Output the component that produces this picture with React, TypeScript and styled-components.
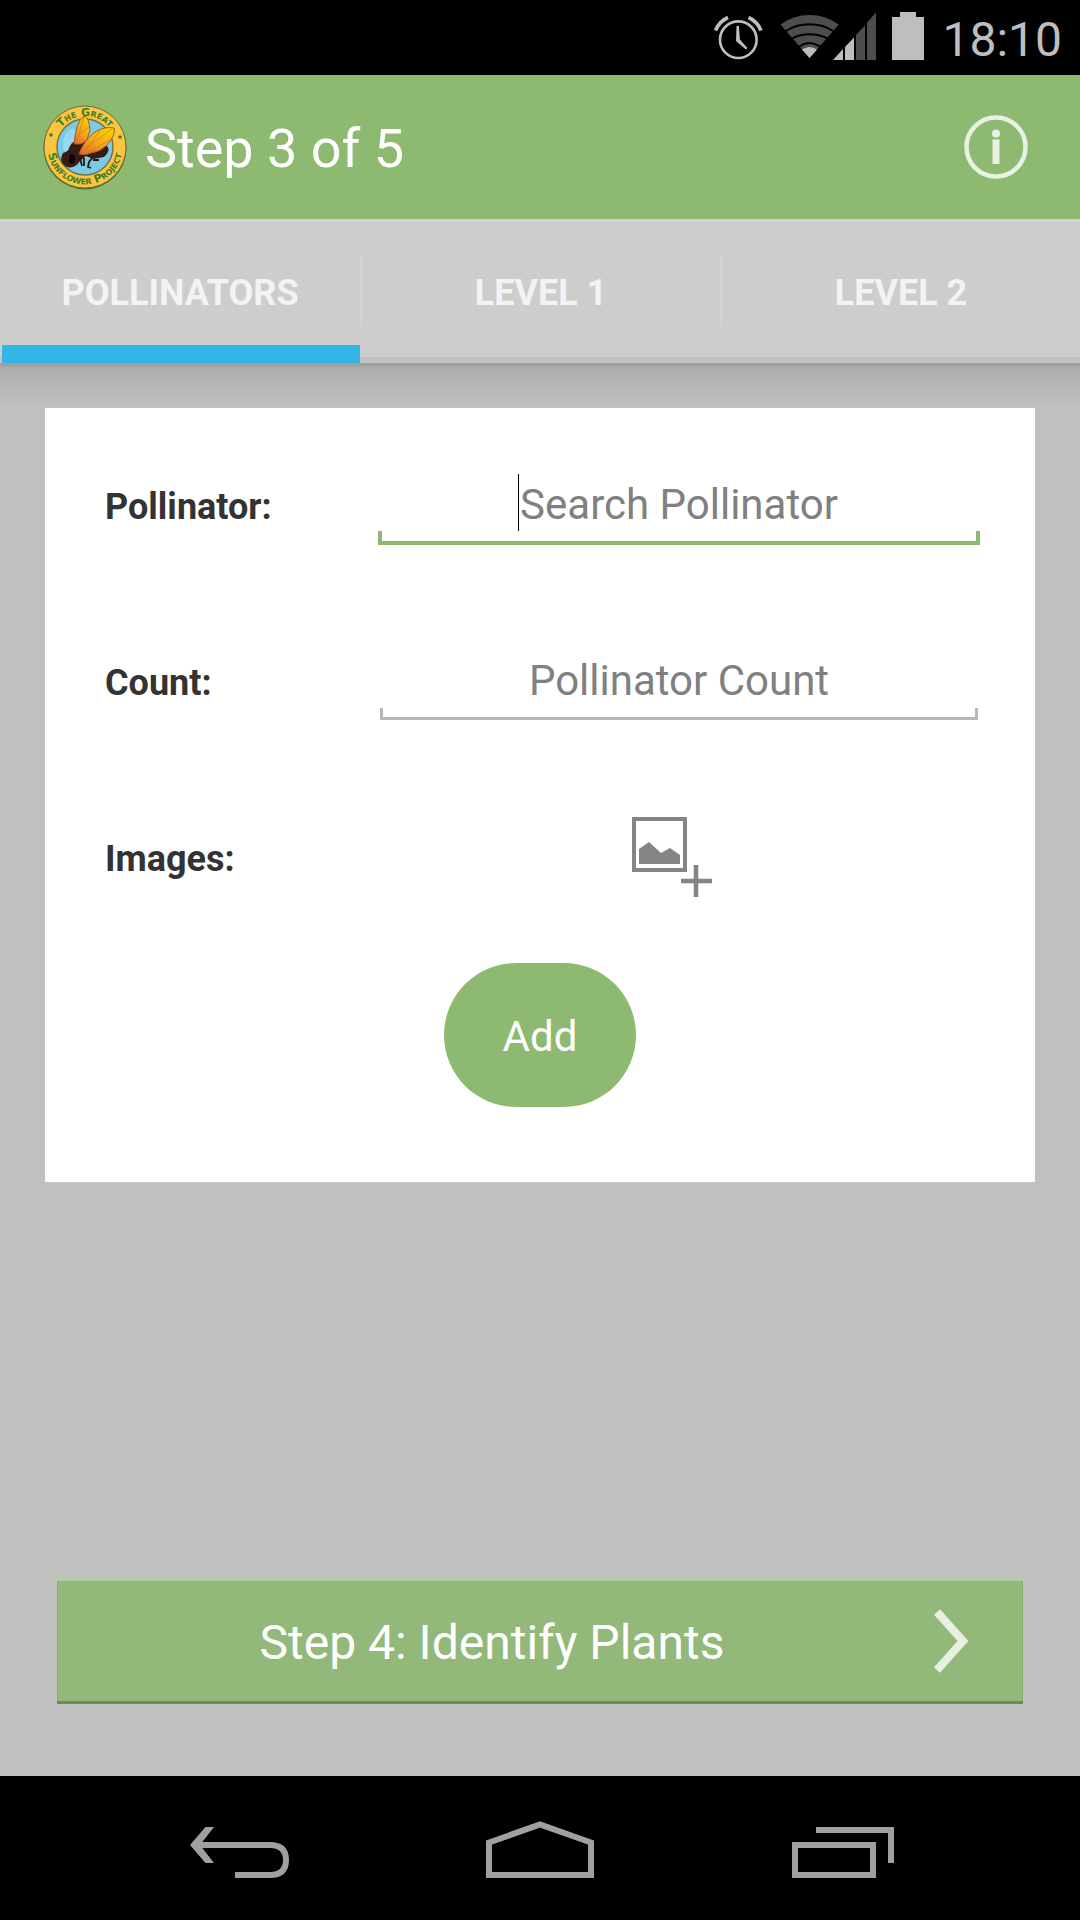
import React, { useState } from "react";
import styled, { createGlobalStyle } from "styled-components";

const green = "#8eb971";

const GlobalStyle = createGlobalStyle`
  *, *::before, *::after { box-sizing: border-box; }
  body {
    margin: 0;
    background: #bfc1be;
    font-family: Roboto, "Noto Sans", sans-serif;
  }
  button, input {
    font-family: inherit;
    margin: 0;
    border-radius: 0;
  }
`;

const Screen = styled.div`
  display: flex;
  flex-direction: column;
  min-height: 100vh;
`;

const StatusBar = styled.div`
  display: flex;
  align-items: center;
  justify-content: flex-end;
  gap: 18px;
  height: 75px;
  padding-right: 18px;
  background: #000;
  color: #bebebe;
`;

const Clock = styled.span`
  padding-top: 4px;
  font-size: 48px;
  line-height: 56px;
`;

const StatusIcons = styled.svg`
  display: block;
`;

const ActionBar = styled.header`
  display: flex;
  align-items: center;
  height: 144px;
  padding: 0 48px 0 42px;
  background: ${green};
`;

const Title = styled.h1`
  flex: 1;
  margin: 0 0 0 17px;
  padding-top: 4px;
  color: #fff;
  font-size: 54px;
  font-weight: 400;
  line-height: 64px;
`;

const LogoLettering = styled.g`
  fill: #3e7c27;
  font-family: "DejaVu Sans", sans-serif;
  font-size: 11px;
  font-weight: 700;
  font-variant: small-caps;
  text-anchor: middle;
`;

const IconButton = styled.button`
  display: flex;
  align-items: center;
  justify-content: center;
  padding: 0;
  border: 0;
  background: none;
  cursor: pointer;
`;

const TabBar = styled.nav`
  display: grid;
  grid-template-columns: repeat(3, 1fr);
  height: 144px;
  background: #cdcdcd;
  border-top: 3px solid #d3d3d3;
  box-shadow: inset 0 -6px #c1c1c1;
`;

const Tab = styled.button<{ $active: boolean }>`
  display: flex;
  padding: 33px 0 0;
  border: 0;
  border-left: 2px solid transparent;
  background: none;
  box-shadow: ${(p) => (p.$active ? "inset 0 -18px #33b5e5" : "none")};
  color: #f3f3f3;
  font-size: 36px;
  font-weight: 700;
  text-transform: uppercase;
  cursor: pointer;
`;

const TabLabel = styled.span`
  flex: 1;
  height: 72px;
  margin-left: -2px;
  line-height: 76px;
  text-align: center;

  ${Tab}:not(:first-child) & {
    border-left: 2px solid #d4d4d4;
  }
`;

const Main = styled.main`
  flex: 1;
  display: flex;
  flex-direction: column;
  padding: 45px 45px 72px;
  background:
    linear-gradient(#9f9f9f, #9f9f9f) 0 0 / 100% 3px no-repeat,
    linear-gradient(#a5a7a4, #b3b5b2 15px, #bfc1be) 0 0 / 100% 45px no-repeat,
    #bfc1be;
`;

const Card = styled.form`
  display: flex;
  flex-direction: column;
  padding: 57px 0 75px;
  background: #fff;
`;

const FieldRow = styled.div`
  display: grid;
  grid-template-columns: 273px 1fr;
  align-items: start;
  height: 176px;
  padding: 0 55px 0 60px;
`;

const Label = styled.label`
  color: #333;
  font-size: 36px;
  font-weight: 700;
  line-height: 84px;
`;

const Field = styled.div<{ $focused?: boolean }>`
  position: relative;
  height: 80px;
  color: ${(p) => (p.$focused ? green : "#b7b7b7")};

  &::after {
    content: "";
    position: absolute;
    left: ${(p) => (p.$focused ? 0 : 2)}px;
    right: ${(p) => (p.$focused ? 0 : 2)}px;
    bottom: ${(p) => (p.$focused ? 0 : 1)}px;
    height: ${(p) => (p.$focused ? 14 : 12)}px;
    border: solid currentColor;
    border-width: ${(p) => (p.$focused ? "0 4px 4px" : "0 3px 3px")};
    pointer-events: none;
  }
`;

const TextInput = styled.input`
  display: block;
  width: 100%;
  height: 78px;
  padding: 0;
  border: 0;
  outline: 0;
  background: none;
  color: #333;
  font-size: 42px;
  text-align: center;
  caret-color: #000;

  &::placeholder {
    color: #808080;
    opacity: 1;
  }
`;

const Caret = styled.span`
  position: absolute;
  left: calc(50% - 161px);
  top: 9px;
  width: 1px;
  height: 57px;
  background: #000;
`;

const ImageRow = styled(FieldRow)`
  height: 146px;
`;

const ImageCell = styled.div`
  display: flex;
  justify-content: center;
`;

const AddButton = styled.button`
  align-self: center;
  width: 192px;
  height: 144px;
  padding: 2px 0 0;
  border: 0;
  border-radius: 72px;
  background: ${green};
  color: #fff;
  font-size: 42px;
  cursor: pointer;
`;

const NextButton = styled.button`
  display: flex;
  align-items: center;
  gap: 5px;
  height: 126px;
  margin: auto 12px 0;
  padding: 0 51px 0 0;
  border: 0;
  background: #93b97a;
  box-shadow: inset 0 3px #b4cda3, inset 0 -3px #6c8c57, inset 0 0 0 1px #85aa6b;
  color: #fff;
  font-size: 48px;
  cursor: pointer;
`;

const NextLabel = styled.span`
  flex: 1;
  padding-top: 2px;
  text-align: center;
`;

const NavBar = styled.footer`
  display: flex;
  justify-content: center;
  gap: 84px;
  height: 144px;
  background: #000;
`;

const NavButton = styled(IconButton)`
  width: 220px;
`;

function StatusGlyphs() {
  return (
    <StatusIcons width="212" height="75" viewBox="712 0 212 75" aria-hidden="true">
      <g fill="none" stroke="#bebebe">
        <circle cx="738.3" cy="39.7" r="18.3" strokeWidth="2.6" />
        <path d="M715.5 30.5Q719 21.500 728 17.500M761 30.500Q757.500 21.500 748.500 17.500" strokeWidth="3.600" />
      </g>
      <path d="M736.500 26h2.400l1 13.500 7.500 8.500-1.500 1.500L736 41z" fill="#bebebe" />
      <path d="M809.500 58L780.500 24.500Q793 15 809.500 15T838.800 24.500z" fill="#4d4d4d" />
      <path d="M809.500 58L802 49.500Q809.500 44.500 817 49.500z" fill="#bebebe" />
      <g fill="none" stroke="#000" strokeWidth="2">
        <path d="M785 31.500Q796 24.300 809.500 24.300T834 31.500" />
        <path d="M792 38.500Q800 34.200 809.500 34.200T828 38.500" />
        <path d="M799 46.500Q809.500 39.500 820 46.500" />
      </g>
      <path d="M833 60l10-11v11zM845 60V47l9-9.500V60z" fill="#bebebe" />
      <path d="M856 60V35l9-9.500V60zM867 60V22.500l9-10V60z" fill="#4d4d4d" />
      <path d="M892 60V17h8v-5h16v5h8v43z" fill="#bebebe" />
    </StatusIcons>
  );
}

function Logo() {
  return (
    <svg width="86" height="88" viewBox="-43 -44 86 88" role="img" aria-label="The Great Sunflower Project">
      <defs>
        <path id="upper-arc" d="M-31 0A31 31 0 0 1 31 0" />
        <path id="lower-arc" d="M-37.500 0A37.500 37.500 0 0 0 37.500 0" />
        <linearGradient id="wing" x1="0.700" y1="0" x2="0.200" y2="1">
          <stop offset="0" stopColor="#fbd000" />
          <stop offset="0.500" stopColor="#f5a91b" />
          <stop offset="1" stopColor="#e36b30" />
        </linearGradient>
      </defs>
      <circle cy="1" r="41.500" fill="#4e6c35" />
      <circle r="41" fill="#fcc540" stroke="#6c6c38" />
      <circle r="28" fill="#7bcbe8" stroke="#6f7448" strokeWidth="1.500" />
      <ellipse cx="-12" cy="-3" rx="10" ry="15" fill="#96d8ee" />
      <LogoLettering>
        <text>
          <textPath href="#upper-arc" startOffset="50%">The Great</textPath>
        </text>
        <text>
          <textPath href="#lower-arc" startOffset="50%">Sunflower Project</textPath>
        </text>
        <circle cx="-34" cy="-12" r="1.800" />
        <circle cx="35" cy="-10" r="1.800" />
      </LogoLettering>
      <path d="M-10-6Q-4-11 3-7L10-3 22-1Q26 4 19 10L8 12 1 9-5 14Q-10 22-18 20-27 15-22 6-16 4-16 1-14-4-10-6Z" fill="#351b12" />
      <path d="M-5 11L-3 19M-1 11L-1 19M8 10L4 15 3 20 6 21M8 13L14 13" fill="none" stroke="#251812" strokeWidth="1.800" />
      <ellipse cx="-13" cy="12" rx="3" ry="5" fill="#080808" />
      <path d="M-11-3Q-9-26-1-31 4-30 5-17L2-7-4-3Z" fill="url(#wing)" stroke="#a45b1c" />
      <path d="M-6 7Q-1-7 10-15 20-21 29-19 31-12 22-2 15 5 6 6Q0 9-6 7Z" fill="url(#wing)" stroke="#a45b1c" />
      <path d="M-5 5L27-18M2 2L16-18M4 5L25-7M-8-5L-1-30M-6-13L4-20" fill="none" stroke="#c57f16" strokeWidth="0.700" />
    </svg>
  );
}

const tabs = ["Pollinators", "Level 1", "Level 2"];

export default function App() {
  const [active, setActive] = useState(0);
  const [name, setName] = useState("");
  const [count, setCount] = useState("");

  return (
    <Screen>
      <GlobalStyle />
      <StatusBar>
        <StatusGlyphs />
        <Clock>18:10</Clock>
      </StatusBar>
      <ActionBar>
        <Logo />
        <Title>Step 3 of 5</Title>
        <IconButton aria-label="Information">
          <svg width="72" height="72" viewBox="0 0 72 72">
            <circle cx="36" cy="36" r="29.500" fill="none" stroke="#e8f1e3" strokeWidth="4.500" />
            <circle cx="36" cy="22.500" r="4" fill="#e8f1e3" />
            <path d="M32.500 28.500h7V53h-7z" fill="#e8f1e3" />
          </svg>
        </IconButton>
      </ActionBar>
      <TabBar>
        {tabs.map((tab, i) => (
          <Tab key={tab} $active={i === active} onClick={() => setActive(i)}>
            <TabLabel>{tab}</TabLabel>
          </Tab>
        ))}
      </TabBar>
      <Main>
        <Card onSubmit={(e) => e.preventDefault()}>
          <FieldRow>
            <Label htmlFor="pollinator">Pollinator:</Label>
            <Field $focused>
              <TextInput id="pollinator" placeholder="Search Pollinator" value={name} onChange={(e) => setName(e.target.value)} />
              {name === "" && <Caret />}
            </Field>
          </FieldRow>
          <FieldRow>
            <Label htmlFor="count">Count:</Label>
            <Field>
              <TextInput id="count" inputMode="numeric" placeholder="Pollinator Count" value={count} onChange={(e) => setCount(e.target.value)} />
            </Field>
          </FieldRow>
          <ImageRow>
            <Label htmlFor="add-image">Images:</Label>
            <ImageCell>
              <IconButton id="add-image" type="button" aria-label="Add image">
                <svg width="96" height="84" viewBox="7 8 96 84">
                  <path d="M10 10h51v51H10z" fill="none" stroke="#858585" strokeWidth="4" />
                  <path d="M15 55V40l10-7 12 11 9-5 10 7v9z" fill="#858585" />
                  <path d="M72 56v32M57 72h31" fill="none" stroke="#858585" strokeWidth="4.500" />
                </svg>
              </IconButton>
            </ImageCell>
          </ImageRow>
          <AddButton type="submit">Add</AddButton>
        </Card>
        <NextButton>
          <NextLabel>Step 4: Identify Plants</NextLabel>
          <svg width="40" height="72" viewBox="0 0 40 72" aria-hidden="true">
            <path d="M5 7L31 36 5 65" fill="none" stroke="#e8f0e2" strokeWidth="8" />
          </svg>
        </NextButton>
      </Main>
      <NavBar>
        <NavButton aria-label="Back">
          <svg width="108" height="72" viewBox="182 1812 108 72">
            <path d="M196 1845H270Q286 1845 286 1860T270 1875H235" fill="none" stroke="#a0a0a0" strokeWidth="6" />
            <path d="M190 1845l15.500-18h8.500l-14 18 14 18h-8.500z" fill="#a0a0a0" />
          </svg>
        </NavButton>
        <NavButton aria-label="Home">
          <svg width="108" height="72" viewBox="486 1812 108 72">
            <path d="M489 1875V1842.500L540 1824.500 591 1842.500V1875z" fill="none" stroke="#a0a0a0" strokeWidth="6" />
          </svg>
        </NavButton>
        <NavButton aria-label="Recent apps">
          <svg width="108" height="72" viewBox="790 1812 108 72">
            <path d="M795 1845h78v30h-78zM816 1830h75v33" fill="none" stroke="#a0a0a0" strokeWidth="6" />
          </svg>
        </NavButton>
      </NavBar>
    </Screen>
  );
}
